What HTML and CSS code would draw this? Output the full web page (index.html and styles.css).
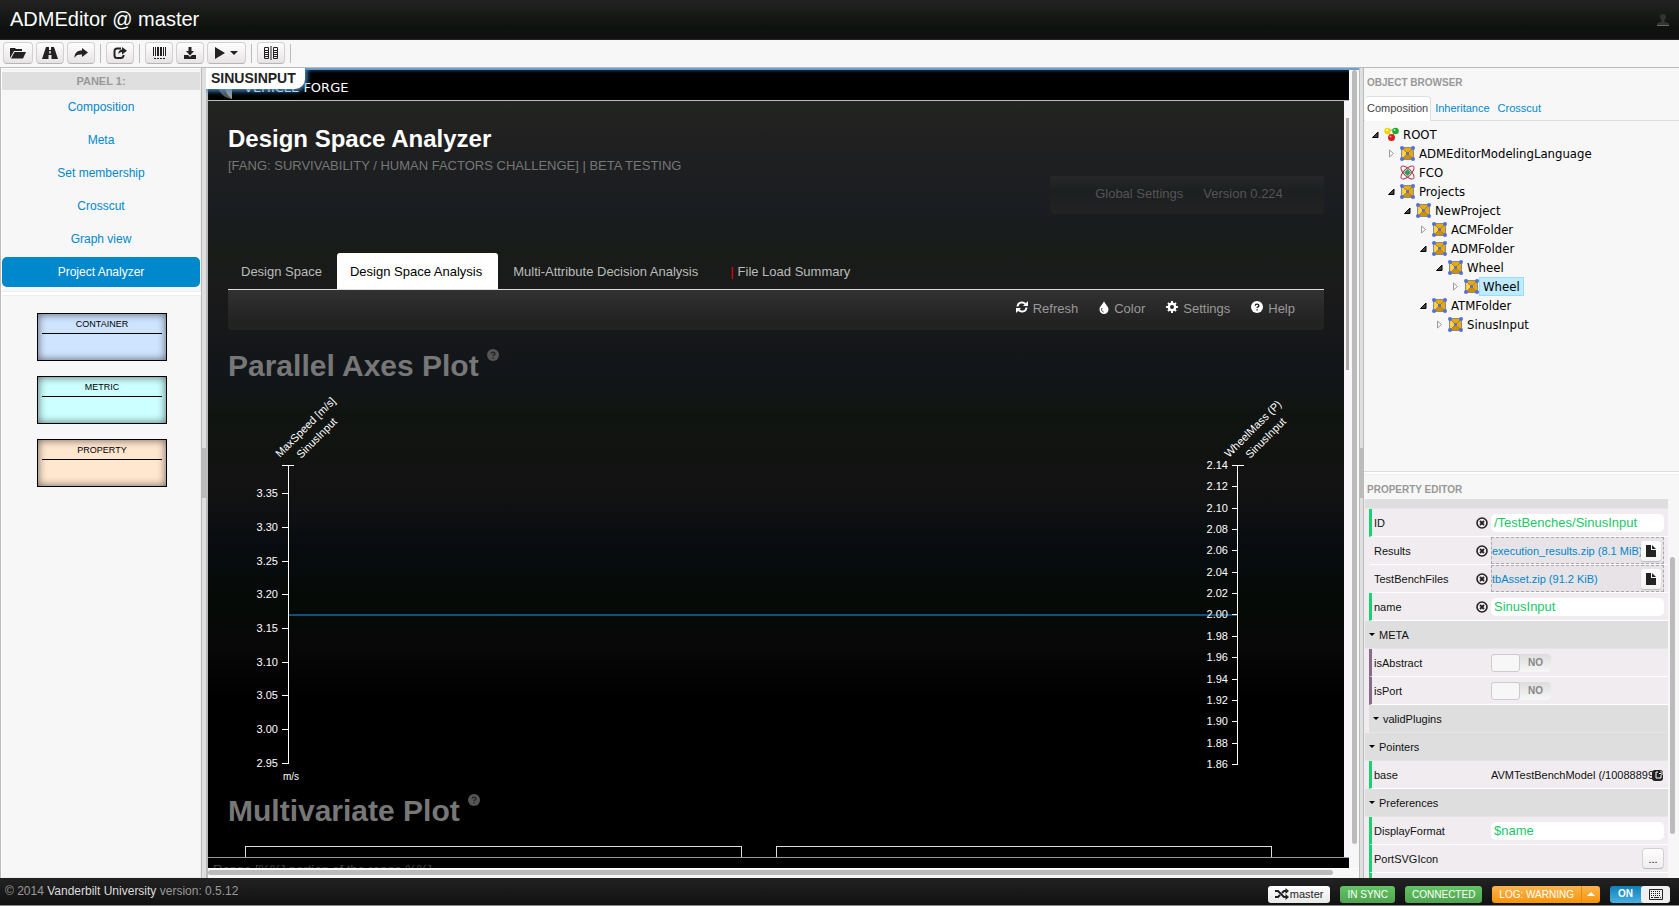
FILE: index.html
```html
<!DOCTYPE html>
<html lang="en">
<head>
<meta charset="utf-8">
<title>ADMEditor @ master</title>
<link rel="stylesheet" href="styles.css">
</head>
<body>
<svg class="defs" aria-hidden="true">
  <defs>
    <symbol id="i-model" viewBox="0 0 15 15">
      <rect x="1.500" y="1.500" width="12" height="12" fill="#e8a90c" stroke="#8a8a8a"/>
      <path d="M2 2l5.500 5.500L2 13z" fill="#ffd04a"/>
      <path d="M2 13l5.500-5.500L13 13z" fill="#cf9000"/>
      <path d="M2 2l11 11M13 2L2 13" stroke="#a8862c" stroke-width="1"/>
      <g fill="#5470d8"><rect x="0" y="0" width="4" height="4" rx="2"/><rect x="11" y="0" width="4" height="4" rx="2"/><rect x="0" y="11" width="4" height="4" rx="2"/><rect x="11" y="11" width="4" height="4" rx="2"/><rect x="6" y="6" width="3" height="3" rx="1"/></g>
    </symbol>
    <symbol id="i-root" viewBox="0 0 15 15">
      <path d="M3 3l5 7 4-7z" fill="none" stroke="#999"/>
      <circle cx="3.500" cy="4" r="3.200" fill="#ecd800"/><circle cx="11.500" cy="4" r="3.300" fill="#1fae2c"/><circle cx="7.500" cy="10.500" r="3.500" fill="#dd1c1c"/>
      <circle cx="3" cy="3" r="1" fill="#fffbb0"/><circle cx="10.500" cy="3" r="1" fill="#a8f0a8"/><circle cx="6.500" cy="9.500" r="1" fill="#ff9a9a"/>
    </symbol>
    <symbol id="i-fco" viewBox="0 0 15 15">
      <g fill="none" stroke="#b23a55"><ellipse cx="7.500" cy="7.500" rx="8.500" ry="3.600" transform="rotate(45 7.500 7.500)"/><ellipse cx="7.500" cy="7.500" rx="8.500" ry="3.600" transform="rotate(-45 7.500 7.500)"/></g>
      <path d="M7.500 4l3.500 3.500-3.500 3.500L4 7.500z" fill="#2fa05a"/>
    </symbol>
    <symbol id="i-open" viewBox="0 0 9 9"><path d="M7 2v5.500H1.500z" fill="#444" stroke="#000"/></symbol>
    <symbol id="i-closed" viewBox="0 0 9 9"><path d="M2.500 1v7l4-3.500z" fill="#fff" stroke="#999"/></symbol>
    <symbol id="i-clear" viewBox="0 0 12 12"><circle cx="6" cy="6" r="5" fill="none" stroke="#222" stroke-width="1.600"/><path d="M4 4l4 4M8 4L4 8" stroke="#222" stroke-width="1.800"/></symbol>
    <symbol id="i-help" viewBox="0 0 12 12"><circle cx="6" cy="6" r="6"/><path d="M4.200 4.800c0-2.200 3.700-2.200 3.700 0 0 1.200-1.800 1.100-1.800 2.300M6.100 8.200v1.400" fill="none" stroke="#222" stroke-width="1.400"/></symbol>
    <symbol id="i-file" viewBox="0 0 10 12"><path d="M0 0h5v5h5v7H0z"/><path d="M6 0l4 4H6z"/></symbol>
    <symbol id="i-share" viewBox="0 0 14 12"><path d="M8 1.500H4A2.500 2.500 0 0 0 1.500 4v4.500A2.500 2.500 0 0 0 4 11h4a2.500 2.500 0 0 0 2.500-2.500V8" fill="none" stroke="#222" stroke-width="2"/><path d="M9 0l5 3.700L9 7.400V5C7 5 6 6 5.500 7.500 5 4.500 6.500 2.500 9 2.400z"/></symbol>
  </defs>
</svg>

<div class="app">
  <header class="titlebar">
    <h1 class="titlebar-name">ADMEditor @ master</h1>
    <svg class="user-icon" width="12" height="12" viewBox="0 0 12 12"><circle cx="6" cy="3" r="3"/><path d="M4.500 5h3v2.500l4.500 2V11H0V9.500l4.500-2z"/><path d="M0 11h12v1H0z" fill="#666"/></svg>
  </header>

  <div class="toolbar" role="toolbar">
    <button class="tool tool-open" aria-label="Open"><svg width="16" height="12" viewBox="0 0 16 12"><path d="M0 11V1h5l1 1h6v2H4z"/><path d="M4.500 5H16l-3 6.500H1z"/></svg></button>
    <button class="tool" aria-label="Road"><svg width="16" height="12" viewBox="0 0 16 12"><path d="M4 0h3v3h2V0h3l4 12H9.500V8h-3v4H0z"/><path d="M7.300 4h1.400v2.500H7.300z" fill="#fff"/></svg></button>
    <button class="tool" aria-label="Forward"><svg width="14" height="12" viewBox="0 0 14 12"><path d="M8 1l6 4.500L8 10V7.500C4 7.200 2 8 .5 11 .5 6 3 3.500 8 3.500z"/></svg></button>
    <span class="tool-sep"></span>
    <button class="tool" aria-label="Share"><svg width="14" height="12"><use href="#i-share"/></svg></button>
    <span class="tool-sep"></span>
    <button class="tool" aria-label="Barcode"><svg width="13" height="12" viewBox="0 0 13 12"><path d="M0 0h1v9H0zM2 0h1v9H2zM4 0h2v9H4zM7 0h2v9H7zM10 0h1v9h-1zM12 0h1v9h-1zM1 11h2v1H1zM4 11h2v1H4zM7 11h2v1H7zM10 11h2v1h-2z"/></svg></button>
    <button class="tool" aria-label="Download"><svg width="12" height="12" viewBox="0 0 12 12"><path d="M4.500 0h3v4H10L6 8.500 2 4h2.500zM0 8h4l2 2 2-2h4v4H0z"/></svg></button>
    <button class="tool tool-run" aria-label="Run"><svg width="23" height="12" viewBox="0 0 23 12"><path d="M0 0l10 6-10 6zM15 4h8l-4 4z"/></svg></button>
    <span class="tool-sep"></span>
    <button class="tool" aria-label="Split"><svg width="14" height="14" viewBox="0 0 14 14"><path d="M6.500 0h1v14h-1z"/><path d="M.5 1.500h4v11h-4zM.5 4.500h4M.5 6.500h4M.5 8.500h4M.5 10.500h4M9.500 1.500h4v11h-4zM9.500 4.500h4M9.500 6.500h4M9.500 8.500h4M9.500 10.500h4" fill="none" stroke="#222"/></svg></button>
    <span class="tool-sep"></span>
  </div>

  <main class="workspace">
    <aside class="left">
      <section class="card">
        <h2 class="panel-title">PANEL 1:</h2>
        <nav class="views">
          <a href="#">Composition</a>
          <a href="#">Meta</a>
          <a href="#">Set membership</a>
          <a href="#">Crosscut</a>
          <a href="#">Graph view</a>
          <a href="#" class="active">Project Analyzer</a>
        </nav>
      </section>
      <section class="card parts">
        <div class="part part-container"><span>CONTAINER</span></div>
        <div class="part part-metric"><span>METRIC</span></div>
        <div class="part part-property"><span>PROPERTY</span></div>
      </section>
    </aside>

    <div class="splitter"><span></span></div>

    <section class="canvas">
      <div class="view-name">SINUSINPUT</div>
      <div class="frame">
        <div class="brandbar">
          <svg width="18" height="20" viewBox="0 0 18 20"><path d="M0 4l16 2v14C8 19 3 14 0 4z" fill="#555"/><path d="M9 8l7-3v15c-4-3-6-6-7-12z" fill="#999"/></svg>
          <span>VEHICLE FORGE</span>
        </div>
        <div class="page-wrap">
          <div class="page">
            <h2 class="page-title">Design Space Analyzer</h2>
            <p class="page-sub">[FANG: SURVIVABILITY / HUMAN FACTORS CHALLENGE] | BETA TESTING</p>
            <div class="globals"><a href="#">Global Settings</a><a href="#">Version 0.224</a></div>
            <nav class="tabs">
              <a href="#">Design Space</a>
              <a href="#" class="active">Design Space Analysis</a>
              <a href="#">Multi-Attribute Decision Analysis</a>
              <a href="#" class="load"><span class="alert">|</span>File Load Summary</a>
            </nav>
            <div class="actions">
              <a href="#"><svg width="12" height="12" viewBox="0 0 12 12"><path d="M1.500 5.500C2 1 7 .5 9.500 3M10.500 6.500C10 11 5 11.500 2.500 9" fill="none" stroke="#fff" stroke-width="2"/><path d="M12 0v5H7zM0 12V7h5z"/></svg>Refresh</a>
              <a href="#"><svg width="10" height="13" viewBox="0 0 10 13"><path d="M5 0c1 3.500 4.500 5 4.500 8.500a4.500 4.500 0 0 1-9 0C.5 5 4 3.500 5 0z"/><path d="M3 7c-1 2 0 3.500 1.500 4" fill="none" stroke="#333"/></svg>Color</a>
              <a href="#"><svg width="12" height="12" viewBox="0 0 12 12"><circle cx="6" cy="6" r="3.200" fill="none" stroke="#fff" stroke-width="2.400"/><path d="M6 0v2M6 10v2M0 6h2M10 6h2M2 2l1.400 1.400M8.600 8.600L10 10M10 2L8.600 3.400M3.400 8.600L2 10" stroke="#fff" stroke-width="2"/></svg>Settings</a>
              <a href="#"><svg width="12" height="12"><use href="#i-help"/></svg>Help</a>
            </div>
            <h3 class="plot-title">Parallel Axes Plot<svg width="12" height="12"><use href="#i-help"/></svg></h3>
            <svg class="chart" viewBox="0 0 1096 395" role="img" aria-label="Parallel axes plot">
              <path d="M61 225H1009" stroke="#10507f" stroke-width="2"/>
              <g fill="none" stroke="#fff">
                <path d="M60.500 75V374M54 75.500h12M54 103.500h6M54 137.500h6M54 171.500h6M54 204.500h6M54 238.500h6M54 272.500h6M54 305.500h6M54 339.500h6M54 373.500h6"/>
                <path d="M1009.500 75V375M1004 75.500h12M1004 96.500h5M1004 118.500h5M1004 139.500h5M1004 160.500h5M1004 182.500h5M1004 203.500h5M1004 224.500h5M1004 246.500h5M1004 267.500h5M1004 289.500h5M1004 310.500h5M1004 331.500h5M1004 353.500h5M1004 374.500h5"/>
              </g>
              <g class="ticks">
                <text x="50" y="107">3.35</text><text x="50" y="141">3.30</text><text x="50" y="175">3.25</text><text x="50" y="208">3.20</text><text x="50" y="242">3.15</text><text x="50" y="276">3.10</text><text x="50" y="309">3.05</text><text x="50" y="343">3.00</text><text x="50" y="377">2.95</text>
                <text x="1000" y="79">2.14</text><text x="1000" y="100">2.12</text><text x="1000" y="122">2.10</text><text x="1000" y="143">2.08</text><text x="1000" y="164">2.06</text><text x="1000" y="186">2.04</text><text x="1000" y="207">2.02</text><text x="1000" y="228">2.00</text><text x="1000" y="250">1.98</text><text x="1000" y="271">1.96</text><text x="1000" y="293">1.94</text><text x="1000" y="314">1.92</text><text x="1000" y="335">1.90</text><text x="1000" y="357">1.88</text><text x="1000" y="378">1.86</text>
              </g>
              <g class="axis-names">
                <text transform="translate(52 68) rotate(-45)">MaxSpeed [m/s]</text>
                <text transform="translate(73 69) rotate(-45)">SinusInput</text>
                <text transform="translate(1001 68) rotate(-45)">WheelMass (P)</text>
                <text transform="translate(1022 69) rotate(-45)">SinusInput</text>
                <text class="unit" x="55" y="390">m/s</text>
              </g>
            </svg>
            <h3 class="plot-title plot-title-next">Multivariate Plot<svg width="12" height="12"><use href="#i-help"/></svg></h3>
            <div class="plots"><div></div><div></div></div>
          </div>
          <div class="page-scroll"><span></span></div>
        </div>
        <div class="frame-foot">Range [%%] portion of the range %%]</div>
      </div>
      <div class="vscroll"><span></span></div>
      <div class="hscroll"><span></span></div>
    </section>

    <div class="splitter splitter-right"><span></span></div>

    <aside class="right">
      <section class="browser">
        <h2 class="side-title">OBJECT BROWSER</h2>
        <nav class="side-tabs"><a href="#" class="active">Composition</a><a href="#">Inheritance</a><a href="#">Crosscut</a></nav>
        <ul class="tree">
          <li><svg class="exp"><use href="#i-open"/></svg><svg class="ico"><use href="#i-root"/></svg><span>ROOT</span>
            <ul>
              <li><svg class="exp"><use href="#i-closed"/></svg><svg class="ico"><use href="#i-model"/></svg><span>ADMEditorModelingLanguage</span></li>
              <li><svg class="exp"></svg><svg class="ico"><use href="#i-fco"/></svg><span>FCO</span></li>
              <li><svg class="exp"><use href="#i-open"/></svg><svg class="ico"><use href="#i-model"/></svg><span>Projects</span>
                <ul>
                  <li><svg class="exp"><use href="#i-open"/></svg><svg class="ico"><use href="#i-model"/></svg><span>NewProject</span>
                    <ul>
                      <li><svg class="exp"><use href="#i-closed"/></svg><svg class="ico"><use href="#i-model"/></svg><span>ACMFolder</span></li>
                      <li><svg class="exp"><use href="#i-open"/></svg><svg class="ico"><use href="#i-model"/></svg><span>ADMFolder</span>
                        <ul>
                          <li><svg class="exp"><use href="#i-open"/></svg><svg class="ico"><use href="#i-model"/></svg><span>Wheel</span>
                            <ul>
                              <li><svg class="exp"><use href="#i-closed"/></svg><svg class="ico"><use href="#i-model"/></svg><span class="selected">Wheel</span></li>
                            </ul>
                          </li>
                        </ul>
                      </li>
                      <li><svg class="exp"><use href="#i-open"/></svg><svg class="ico"><use href="#i-model"/></svg><span>ATMFolder</span>
                        <ul>
                          <li><svg class="exp"><use href="#i-closed"/></svg><svg class="ico"><use href="#i-model"/></svg><span>SinusInput</span></li>
                        </ul>
                      </li>
                    </ul>
                  </li>
                </ul>
              </li>
            </ul>
          </li>
        </ul>
      </section>

      <section class="props">
        <h2 class="side-title">PROPERTY EDITOR</h2>
        <div class="props-body">
          <div class="rows">
            <div class="group group-cut"></div>
            <div class="row green"><label for="p-id">ID</label><svg class="clear"><use href="#i-clear"/></svg><input id="p-id" type="text" value="/TestBenches/SinusInput"></div>
            <div class="row"><span class="key">Results</span><svg class="clear"><use href="#i-clear"/></svg><div class="asset"><a href="#">execution_results.zip (8.1 MiB)</a><button aria-label="Choose results file"><svg width="10" height="12"><use href="#i-file"/></svg></button></div></div>
            <div class="row"><span class="key">TestBenchFiles</span><svg class="clear"><use href="#i-clear"/></svg><div class="asset"><a href="#">tbAsset.zip (91.2 KiB)</a><button aria-label="Choose test bench file"><svg width="10" height="12"><use href="#i-file"/></svg></button></div></div>
            <div class="row green"><label for="p-name">name</label><svg class="clear"><use href="#i-clear"/></svg><input id="p-name" type="text" value="SinusInput"></div>
            <div class="group">META</div>
            <div class="row purple"><label for="p-abs">isAbstract</label><span class="clear"></span><span class="switch"><input id="p-abs" type="checkbox"><i></i><b>NO</b></span></div>
            <div class="row purple"><label for="p-port">isPort</label><span class="clear"></span><span class="switch"><input id="p-port" type="checkbox"><i></i><b>NO</b></span></div>
            <div class="group group-sub">validPlugins</div>
            <div class="group">Pointers</div>
            <div class="row green"><span class="key">base</span><span class="clear"></span><div class="pointer"><span>AVMTestBenchModel (/10088899</span><button aria-label="Follow"><svg width="12" height="12" viewBox="0 0 12 12"><rect width="11" height="11" y="1" rx="3"/><path d="M6 3H4v6h5V7" fill="none" stroke="#fff"/><path d="M7 4.500h2.500M8.500 2L11 4.500 8.500 7" fill="none" stroke="#fff"/></svg></button></div></div>
            <div class="group">Preferences</div>
            <div class="row green"><label for="p-fmt">DisplayFormat</label><span class="clear"></span><input id="p-fmt" type="text" value="$name"></div>
            <div class="row green"><span class="key">PortSVGIcon</span><button class="more">...</button></div>
            <div class="row green"></div>
          </div>
          <div class="props-scroll"><span></span></div>
        </div>
      </section>
    </aside>
  </main>

  <footer class="status">
    <p>© 2014 <a href="#">Vanderbilt University</a> version: 0.5.12</p>
    <button class="pill pill-white"><svg width="14" height="12" viewBox="0 0 14 12"><path d="M0 3h3l6 6h3M0 9h3l2-2M7 5l2-2h3" fill="none" stroke="#222" stroke-width="2"/><path d="M10.500 0L14 3l-3.500 3zM10.500 6L14 9l-3.500 3z"/></svg>master</button>
    <button class="pill pill-green">IN SYNC</button>
    <button class="pill pill-green">CONNECTED</button>
    <span class="pill-group"><button class="pill pill-orange">LOG: WARNING</button><button class="pill pill-orange pill-caret" aria-label="Log levels"><svg width="8" height="4" viewBox="0 0 8 4"><path d="M0 4l4-4 4 4z" fill="#fff"/></svg></button></span>
    <button class="keys" aria-label="Keyboard on"><b>ON</b><i><svg width="14" height="11" viewBox="0 0 14 11"><path d="M.5.5h13v10H.5z" fill="none" stroke="#222"/><path d="M2 2.500h10M2 4.500h10M2 6.500h10" stroke="#222" stroke-dasharray="1 1"/><path d="M2 8.500h2M5 8.500h5M11 8.500h1" stroke="#222"/></svg></i></button>
  </footer>
</div>
</body>
</html>
```
FILE: styles.css
```css
* { box-sizing: border-box; }
body { margin: 0; font: 12px/20px "Liberation Sans", Arial, sans-serif; color: #222; background: #f7f7f7; }
h1, h2, h3, p, ul { margin: 0; padding: 0; }
a { color: #08c; text-decoration: none; }
button { margin: 0; padding: 0; border: 0; font: inherit; color: inherit; display: flex; align-items: center; justify-content: center; }
svg { display: block; flex: none; fill: #222; }
.defs { position: absolute; width: 0; height: 0; }

.app { height: 100vh; display: flex; flex-direction: column; overflow: hidden; }

.titlebar { flex: none; height: 40px; padding: 0 10px; display: flex; align-items: center; justify-content: space-between; background: linear-gradient(#222, #0e120e 70%, #111); border-bottom: 1px solid #222; }
.titlebar-name { padding-bottom: 2px; font-size: 20px; font-weight: normal; line-height: 36px; color: #fff; }
.user-icon { fill: #333; }

.toolbar { flex: none; height: 28px; padding: 2px 3px 0; display: flex; gap: 3px; border-bottom: 1px solid #bbb; background: #f7f7f7; }
.tool { width: 28px; height: 22px; border: 1px solid #d4d0d2; border-bottom-color: #b5b5b5; border-radius: 4px; background: linear-gradient(#fff, #e6e3e5); }
.tool-open { width: 30px; }
.tool-run { width: 39px; }
.tool-sep { width: 1px; height: 19px; margin: 2px 2px 0; background: #bbb; }

.workspace { flex: 1; min-height: 0; display: flex; }

.left { flex: none; width: 201px; padding: 1px 0 0 1px; border-left: 1px solid #bbb; display: flex; flex-direction: column; gap: 3px; background: #fff; }
.card { background: #f7f7f7; border: 1px solid #eee; border-width: 1px 1px 1px 0; }
.panel-title { margin-top: 2px; font-size: 11px; line-height: 18px; text-align: center; color: #999; background: #dfdfdf; }
.views { padding: 2px 0 4px; display: flex; flex-direction: column; gap: 3px; text-align: center; }
.views a { line-height: 30px; border-radius: 5px; }
.views .active { background: #08c; color: #fff; }
.parts { flex: 1; padding: 17px 33px 17px 35px; display: flex; flex-direction: column; gap: 15px; }
.part { height: 48px; padding: 0 4px; border: 1px solid #000; box-shadow: inset 0 0 8px rgba(0,0,0,.6); font-size: 9px; text-align: center; color: #000; }
.part span { display: block; height: 20px; line-height: 21px; border-bottom: 1px solid #000; }
.part-container { background: #cfe5ff; }
.part-metric { background: #cff; }
.part-property { background: #ffe6cf; }

.splitter { flex: none; width: 7px; display: flex; align-items: center; background: #dfdfdf; border: solid #bbb; border-width: 0 2px 0 1px; }
.splitter span { width: 4px; height: 50px; background: #bbb; }
.splitter-right { width: 5px; border-width: 0 1px; }
.splitter-right span { width: 3px; }

.canvas { flex: 1; min-width: 0; position: relative; display: grid; grid-template: minmax(0, 1fr) 10px / minmax(0, 1fr) 10px; border-top: 2px solid #6b9fd0; background: #f7f7f7; }
.view-name { position: absolute; left: -2px; top: -2px; padding: 0 9px 0 5px; height: 21px; font-size: 14px; font-weight: bold; line-height: 21px; color: #222; background: #fff; border-radius: 0 0 10px 0; box-shadow: 0 0 5px 2px #4a90d0; clip-path: inset(0 -10px -10px 0); z-index: 1; }
.frame { display: flex; flex-direction: column; min-height: 0; background: #000; box-shadow: inset 0 2px 2px #123; overflow: hidden; }
.brandbar { flex: none; height: 31px; padding: 9px 8px 0; display: flex; gap: 10px; border-bottom: 1px solid #bbb; font: 13px/18px "DejaVu Sans", sans-serif; color: #fff; }
.page-wrap { flex: 1; min-height: 0; display: flex; }
.page { flex: 1; min-width: 0; padding: 22px 20px 0; overflow: hidden; background: linear-gradient(#232522, #202020 5%, #1a1d21 14%, #181c19 20%, #1a1a1a 25%, #121519 36%, #101410 42%, #121212 52%, #080c10 59%, #050a06 66%, #080808 72%, #000 79%); }
.page-title { font-size: 24px; line-height: 32px; color: #fff; }
.page-sub { padding-top: 1px; font-size: 13px; line-height: 20px; color: #777; }
.globals { width: 274px; height: 38px; padding-left: 4px; margin-left: auto; display: flex; justify-content: center; gap: 20px; border-radius: 0 0 4px 4px; background: linear-gradient(#26282a, #1c1f20 40%, #222); font-size: 13px; line-height: 36px; }
.globals a { color: #555; }
.tabs { margin-top: 39px; height: 37px; display: flex; border-bottom: 1px solid #ddd; font-size: 13px; line-height: 37px; }
.tabs a { padding: 0 13px; color: #bbb; }
.tabs .active { margin: 0 2px; padding-right: 16px; border-radius: 3px 3px 0 0; background: #fff; color: #000; }
.tabs .load { padding-left: 19px; }
.alert { margin-right: 4px; color: #e00; }
.actions { height: 40px; padding-right: 29px; display: flex; justify-content: flex-end; align-items: flex-start; gap: 21px; border-radius: 0 0 4px 4px; background: linear-gradient(#323232, #222 80%, #232420); font-size: 13px; line-height: 38px; }
.actions a { display: flex; gap: 5px; color: #999; }
.actions svg { margin-top: 11px; fill: #fff; }
.plot-title { margin-top: 16px; display: flex; gap: 8px; font-size: 30px; line-height: 40px; color: #777; }
.plot-title svg { margin-top: 3px; fill: #555; }
.plot-title-next { margin-top: 6px; }
.chart { width: 100%; height: auto; margin-top: 4px; font-size: 11px; fill: #fff; }
.ticks { text-anchor: end; fill: #fff; }
.axis-names { fill: #fff; }
.unit { font-size: 10px; }
.plots { margin: 15px 52px 0 17px; display: grid; grid-template-columns: 1fr 1fr; gap: 34px; }
.plots div { height: 300px; border: 1px solid #ddd; }
.page-scroll { flex: none; width: 5px; padding: 17px 0 0 2px; background: #f7f3f7; }
.page-scroll span { display: block; height: 252px; background: #aaa; }
.frame-foot { flex: none; height: 11px; padding: 0 5px; overflow: hidden; border-top: 1px solid #999; font-size: 13px; line-height: 23px; color: #444; }
.vscroll { padding: 0 2px 0 3px; }
.vscroll span { display: block; height: 97%; border-radius: 3px; background: #bbb; }
.hscroll { grid-column: 1 / -1; padding: 1px 26px 0 0; background: #f7f7f7; border-top: 1px solid #fff; }
.hscroll span { display: block; height: 5px; border-radius: 3px; background: #bbb; }

.right { flex: none; width: 315px; display: flex; flex-direction: column; gap: 2px; background: #fff; }
.browser { flex: none; height: 404px; background: #f7f7f7; border-bottom: 1px solid #ddd; }
.side-title { padding: 5px 3px 0; font-size: 10px; line-height: 20px; color: #999; }
.side-tabs { height: 25px; margin-top: 3px; padding-left: 1px; display: flex; border-bottom: 1px solid #ddd; font-size: 11px; line-height: 25px; }
.side-tabs a { padding: 0 4px; }
.side-tabs .active { height: 25px; padding: 0 2px; line-height: 23px; border: 1px solid #ddd; border-width: 1px 1px 0 0; border-radius: 4px 4px 0 0; background: #fff; color: #444; }
.tree { padding: 4px 0 0 7px; list-style: none; font: 13px/19px "DejaVu Sans Condensed", "DejaVu Sans", Tahoma, sans-serif; font-stretch: condensed; color: #000; }
.tree ul { flex-basis: 100%; padding-left: 16px; list-style: none; }
.tree li { display: flex; flex-wrap: wrap; align-items: center; }
.tree span { height: 19px; padding: 0 3px; line-height: 18px; border: 1px solid transparent; }
.tree .selected { background: #beebff; border-color: #99defd; }
.exp { width: 9px; height: 9px; margin-right: 4px; }
.ico { width: 15px; height: 15px; }

.props { flex: 1; min-height: 0; display: flex; flex-direction: column; background: #f7f7f7; border-top: 1px solid #eee; }
.props .side-title { flex: none; height: 24px; }
.props-body { flex: 1; min-height: 0; display: flex; overflow: hidden; font-size: 11px; color: #111; }
.rows { flex: 1; min-width: 0; padding-left: 1px; background: #f0ecef; }
.group { height: 28px; padding-left: 4px; display: flex; align-items: center; gap: 4px; background: #dedede; border-bottom: 1px solid #e6e4e6; }
.group::before { content: ""; border: 3px solid transparent; border-top-color: #000; border-bottom: 0; }
.group-cut { height: 10px; }
.group-cut::before { display: none; }
.group-sub { margin-left: 4px; }
.row { height: 28px; margin-left: 4px; padding: 0 4px 0 2px; display: flex; align-items: center; border-left: 3px solid transparent; border-bottom: 1px solid #fff; }
.green { border-left-color: #18d170; }
.purple { border-left-color: #8a6a8a; }
.row label, .key { flex: none; width: 102px; white-space: nowrap; }
.clear { flex: none; width: 12px; height: 12px; margin-right: 3px; }
.row input[type="text"] { flex: 1; min-width: 0; width: 100%; height: 18px; padding: 0 3px; border: 0; border-radius: 5px; background: #fff; font: 13px/18px "Liberation Sans", Arial, sans-serif; color: #18c868; }
.asset { flex: 1; min-width: 0; height: 27px; padding-right: 2px; display: flex; align-items: center; border: 1px dashed #aaa; background: #e7e3e6; }
.asset a { flex: 1; min-width: 0; overflow: hidden; white-space: nowrap; }
.asset button { flex: none; width: 20px; height: 20px; border-radius: 3px; background: linear-gradient(#fff, #f2f2f2); box-shadow: 0 1px 1px #bbb; }
.switch { position: relative; display: flex; width: 60px; height: 18px; border-radius: 4px; background: linear-gradient(#ddd, #f7f7f7); color: #888; }
.switch input { position: absolute; inset: 0; width: 100%; height: 100%; margin: 0; opacity: 0; }
.switch i { width: 29px; border: 1px solid #ccc; border-radius: 3px; background: #f7f7f7; }
.switch b { flex: 1; font-size: 10px; line-height: 18px; text-align: center; }
.pointer { flex: 1; min-width: 0; display: flex; align-items: center; }
.pointer span { flex: 1; min-width: 0; white-space: nowrap; }
.pointer button { flex: none; background: none; }
.more { width: 22px; height: 21px; margin-left: auto; border: 1px solid #d4d0d2; border-bottom-color: #bbb; border-radius: 4px; background: linear-gradient(#fff, #eee); }
.props-scroll { flex: none; width: 11px; padding: 58px 4px 44px 2px; display: flex; background: #f7f7f7; }
.props-scroll span { flex: 1; border-radius: 3px; background: #bbb; }

.status { flex: none; height: 28px; padding: 0 9px 0 5px; display: flex; align-items: center; gap: 10px; background: linear-gradient(#222, #111); border-bottom: 1px solid #888; color: #999; }
.status p { flex: 1; margin-bottom: 2px; }
.status p a { color: #ddd; }
.status button { height: 17px; margin-top: 5px; }
.pill { padding: 0 7px; border-radius: 3px; font-size: 10px; line-height: 17px; color: #fff; }
.pill-white { gap: 1px; background: linear-gradient(#fff, #e8e8e8); font-size: 11px; color: #222; }
.pill-green { background: linear-gradient(#62c462, #51a351); }
.pill-orange { background: linear-gradient(#fbb450, #f89406); border-radius: 3px 0 0 3px; }
.pill-caret { width: 19px; border-left: 1px solid #e08a10; border-radius: 0 3px 3px 0; }
.pill-group { display: flex; }
.keys { width: 60px; border-radius: 3px; overflow: hidden; background: linear-gradient(#0e80b8, #4ab0e0); }
.keys b { flex: 1; font-size: 10px; color: #fff; }
.keys i { width: 29px; height: 17px; display: grid; place-items: center; border-radius: 3px; background: #f0f0f0; }
```
